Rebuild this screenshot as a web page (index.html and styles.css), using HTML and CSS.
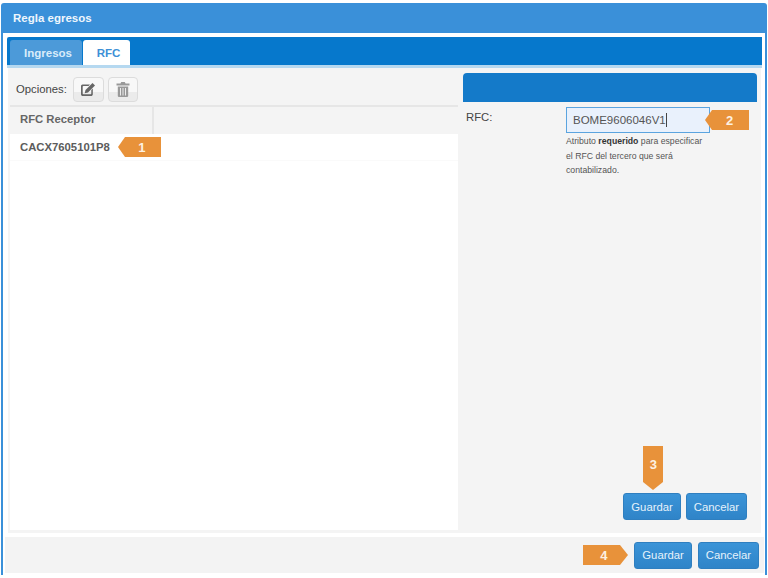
FILE: index.html
```html
<!DOCTYPE html>
<html lang="es">
<head>
<meta charset="utf-8">
<title>Regla egresos</title>
<link rel="stylesheet" href="styles.css">
</head>
<body>
<div class="window">
  <div class="title">Regla egresos</div>
  <div class="inner">
    <div class="tabs">
      <div class="tab">Ingresos</div>
      <div class="tab active">RFC</div>
    </div>
    <div class="content">
      <div class="left">
        <div class="toolbar">
          <span class="opt">Opciones:</span>
          <button class="tool"><svg width="18" height="16" viewBox="0 0 18 16"><path class="ic" d="M3.500 3.500H11L9.500 5H4.500a.8.8 0 0 0-.8.8v6.700c0 .5.300.8.800.8h7c.5 0 .8-.3.800-.8V9l1.500-1.500v5.700c0 1-.8 1.800-1.800 1.800H3.800c-1 0-1.800-.8-1.800-1.800V5.300c0-1 .7-1.800 1.500-1.800z"/><path class="ic" d="M6.500 9 13.500 2l2.500 2.500-7 7-3.300.8z"/></svg></button>
          <button class="tool"><svg width="14" height="17" viewBox="0 0 14 17"><path class="ic2" d="M.5 2.500h4L5.200 1h3.600l.7 1.500h4V4.500H.5zM1.800 5.500h10.400V15a1.200 1.200 0 0 1-1.200 1H3a1.200 1.200 0 0 1-1.200-1z"/><path class="gap" d="M4 7h1v7.500H4zM6.500 7h1v7.500h-1zM9 7h1v7.500H9z"/></svg></button>
        </div>
        <div class="thead"><div class="th">RFC Receptor</div></div>
        <div class="list">
          <div class="row">
            <span>CACX7605101P8</span>
            <span class="tag tag-left">1</span>
          </div>
        </div>
      </div>
      <div class="right">
        <div class="bar"></div>
        <div class="form">
          <div class="label">RFC:</div>
          <div class="field">
            <div class="input-row">
              <div class="input">BOME9606046V1<span class="caret"></span></div>
              <span class="tag tag-left t2">2</span>
            </div>
            <p class="help">Atributo <b>requerido</b> para especificar<br>el RFC del tercero que será<br>contabilizado.</p>
          </div>
        </div>
        <div class="actions">
          <div class="save-wrap">
            <span class="tag-down">3</span>
            <button class="btn">Guardar</button>
          </div>
          <button class="btn">Cancelar</button>
        </div>
      </div>
    </div>
    <div class="footer">
      <span class="tag-right">4</span>
      <button class="btn">Guardar</button>
      <button class="btn">Cancelar</button>
    </div>
  </div>
</div>
</body>
</html>
```
FILE: styles.css
```css
* { box-sizing: border-box; }
html, body { margin: 0; height: 578px; overflow: hidden; background: #fff; }
body { padding: 3px 1px; font-family: "Liberation Sans", Arial, sans-serif; font-size: 12px; color: #555; }
.window { height: 572px; display: flex; flex-direction: column; background: #3a90d9; border-radius: 3px 3px 0 0; padding: 0 2px; }
.title { height: 30px; flex: none; display: flex; align-items: center; padding-left: 10px; color: #eef6fd; font-weight: bold; font-size: 11.500px; }
.inner { flex: 1; min-height: 0; display: flex; flex-direction: column; background: #fff; padding-top: 4px; }
.tabs { height: 31px; flex: none; display: flex; align-items: flex-end; gap: 1px; background: #0678cc; border-bottom: 3px solid #b5d8f0; padding-left: 3px; margin: 0 3px 0 4px; border-radius: 2px 0 0 0; }
.tab { height: 25px; display: flex; align-items: center; justify-content: center; width: 72px; padding-left: 4px; background: #4c9ad9; color: #d9ecfa; font-weight: bold; font-size: 11.500px; border-radius: 3px 3px 0 0; }
.tab.active { width: 47px; background: #fff; color: #3d90d6; }
.content { flex: none; height: 465px; display: flex; background: #f4f4f4; margin: 0 4px 0 5px; padding: 5px 4px 3px 2px; gap: 5px; }
.left { width: 448px; flex: none; display: flex; flex-direction: column; }
.toolbar { height: 34px; flex: none; display: flex; align-items: center; gap: 4px; padding-left: 6px; border-bottom: 2px solid #e6e6e6; }
.opt { font-size: 11.300px; color: #444; margin-right: 2px; }
.tool { width: 31px; height: 25px; padding: 0; display: flex; align-items: center; justify-content: center; border: 1px solid #dcdcdc; border-radius: 4px; background: linear-gradient(#f8f8f8 60%, #ebebeb 60%); }
.tool + .tool { width: 30px; }
.ic { fill: #666; }
.ic2 { fill: #999; }
.gap { fill: #ececec; }
.thead { height: 27px; flex: none; display: flex; }
.th { width: 144px; display: flex; align-items: center; padding: 0 0 4px 10px; font-weight: bold; font-size: 11.300px; color: #666; border-right: 2px solid #e6e6e6; }
.list { flex: 1; background: #fff; }
.row { height: 27px; display: flex; align-items: center; gap: 7px; padding-left: 10px; font-weight: bold; font-size: 11.300px; color: #5c5c5c; border-bottom: 1px solid #fafafa; }
.tag { position: relative; display: flex; align-items: center; justify-content: center; width: 36px; height: 20px; margin-left: 8px; padding-right: 2px; background: #e8923a; color: #fdf1e2; font-weight: bold; font-size: 13px; }
.tag-left::before { content: ""; position: absolute; right: 100%; top: 0; border-style: solid; border-width: 10px 7px 10px 0; border-color: transparent #e8923a transparent transparent; }
.t2 { margin-left: 2px; width: 37px; }
.right { flex: 1; display: flex; flex-direction: column; padding-bottom: 10px; }
.bar { height: 29px; flex: none; background: #147ac9; border-radius: 4px 4px 0 0; }
.form { display: flex; padding: 5px 0 0 3px; }
.label { width: 100px; flex: none; font-size: 11.300px; color: #444; padding-top: 4px; }
.field { flex: 1; }
.input-row { display: flex; align-items: center; }
.input { width: 144px; height: 26px; display: flex; align-items: center; padding-left: 6px; font-size: 11.500px; color: #555; background: #e9f1fc; border: 1px solid #5ba4df; }
.caret { width: 1px; height: 14px; background: #444; }
.help { margin: 1px 0 0; font-size: 8.700px; line-height: 14.500px; color: #555; }
.help b { color: #333; }
.actions { margin-top: auto; display: flex; justify-content: flex-end; gap: 5px; padding-right: 10px; }
.save-wrap { position: relative; }
.tag-down { position: absolute; left: 20px; bottom: 38px; width: 20px; height: 36px; display: flex; align-items: center; justify-content: center; background: #e8923a; color: #fdf1e2; font-weight: bold; font-size: 13px; }
.tag-down::after { content: ""; position: absolute; top: 100%; left: 0; border-style: solid; border-width: 8px 10px 0 10px; border-color: #e8923a transparent transparent transparent; }
.btn { height: 27px; padding: 0 7px; border: 1px solid #2f7fc0; border-radius: 3px; background: linear-gradient(#3b94d8, #2f84c8); color: #e6f2fb; font: 11.300px "Liberation Sans", Arial, sans-serif; }
.footer { flex: none; height: 36px; margin: 4px 1px 0 2px; background: #f3f3f3; display: flex; align-items: center; justify-content: flex-end; gap: 6px; padding-right: 5px; }
.tag-right { position: relative; display: flex; align-items: center; justify-content: center; width: 37px; height: 20px; margin-right: 8px; padding-left: 4px; background: #e8923a; color: #fdf1e2; font-weight: bold; font-size: 13px; }
.tag-right::after { content: ""; position: absolute; left: 100%; top: 0; border-style: solid; border-width: 10px 0 10px 8px; border-color: transparent transparent transparent #e8923a; }
```
